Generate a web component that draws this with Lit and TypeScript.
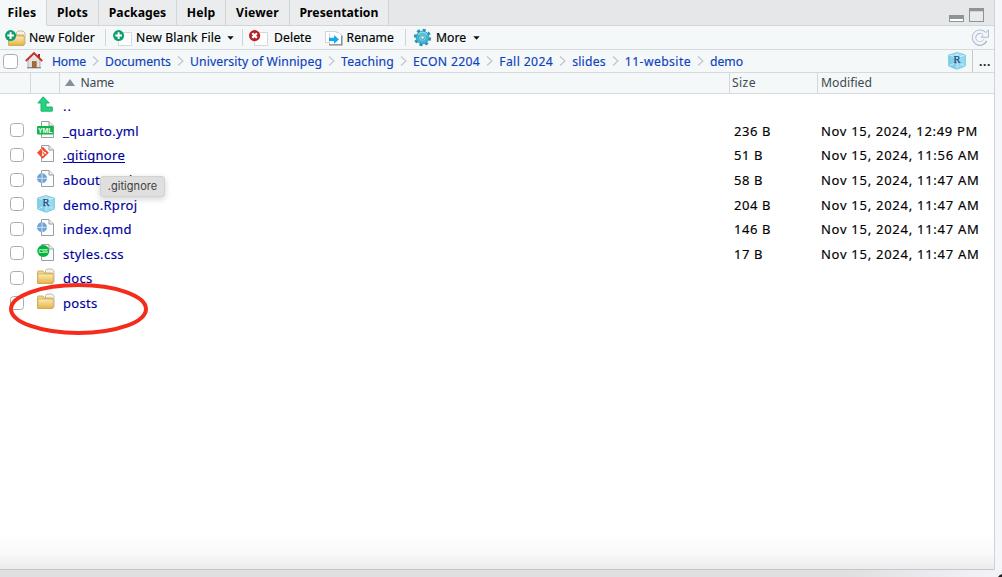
import { LitElement, html, css, svg, nothing } from "lit";
import { customElement, property } from "lit/decorators.js";

/* A text run whose tracking is computed so it fills a given advance width. */
@customElement("fit-text")
class FitText extends LitElement {
  @property({ type: Number }) w = 0;
  @property() text = "";
  @property({ type: Boolean, reflect: true }) underlined = false;
  static styles = css`
    :host { display: inline-block; white-space: pre; flex: none; }
    span { display: inline-block; }
    :host([underlined]) span { text-decoration: underline; text-underline-offset: 1.5px; text-decoration-thickness: 1px; }
  `;
  render() {
    return html`<span>${this.text}</span>`;
  }
  firstUpdated() {
    const el = this.renderRoot.querySelector("span") as HTMLElement;
    const natural = el.getBoundingClientRect().width;
    this.style.width = this.w + "px";
    el.style.letterSpacing = (this.w - natural) / this.text.length + "px";
  }
}

const t = (text: string, w: number, u = false) => html`<fit-text .text=${text} .w=${w} .underlined=${u}></fit-text>`;

const page = svg`<path d="M4.5 .5H12L16.5 5V16.5H4.5Z" fill="#fbfcfd" stroke="#9a9fa5"/><path d="M12 .5V5H16.5" fill="#e9ecef" stroke="#9a9fa5"/>`;
const cube = svg`<path d="M9 .5L17.3 3V14L9 17.3L.7 14V3Z" fill="#a5e0f1"/><path d="M.7 3L9 5.8V17.3L.7 14Z" fill="#82d0ea"/><path d="M9 5.8L17.3 3V14L9 17.3Z" fill="#97d9ee"/><path d="M1 3L9 5.8L17 3M1 14L9 10L17 14M9 1V17" fill="none" stroke="#d5f3fa" stroke-width=".8"/><path d="M9 .5L17.3 3V14L9 17.3L.7 14V3Z" fill="none" stroke="#62bcd8" stroke-width=".7"/><text x="5.4" y="11.4" font-family="Liberation Serif" font-size="10.5" fill="#1f4a86" stroke="#1f4a86" stroke-width=".25">R</text>`;
const folder = svg`<path d="M8.5 5V2.5L10 1H15L17 3V14H9Z" fill="#f5f3ea" stroke="#b7ab8a" stroke-width=".8"/><path d="M.6 4Q.6 3 1.6 3H6L7.5 5H15.5V15.3H.6Z" fill="#f1d68a" stroke="#c3a252" stroke-width=".8"/><path d="M.8 6H16.3V14.4Q16.3 15.4 15.3 15.4H.8Z" fill="url(#fg)" stroke="#c9a552" stroke-width=".7"/><defs><linearGradient id="fg" x2="0" y2="1"><stop stop-color="#fbeab2"/><stop offset="1" stop-color="#e6b447"/></linearGradient></defs>`;
const plus = svg`<circle cx="5.6" cy="5.6" r="5.5" fill="#0d9f6b"/><path d="M5.6 2.3V8.9M2.3 5.6H8.9" stroke="#fff" stroke-width="2"/>`;
const blank = svg`<path d="M5.5 2.5H18.5V15.5H5.5Z" fill="#fff" stroke="#d5d8db"/>`;

const glyphs: Record<string, unknown> = {
  up: svg`<path d="M6.2 .8L12.3 7H9V11H15.3V15.2H4V7H.8Z" fill="#22d482" stroke="#17ae68" stroke-width=".9" stroke-linejoin="round"/>`,
  yml: svg`${page}<rect x="0" y="5" width="16.5" height="8.6" rx="1" fill="#12b548"/><text x="1" y="12" font-family="Liberation Sans" font-weight="bold" font-size="7.8" textLength="14.4" lengthAdjust="spacingAndGlyphs" fill="#fff">YML</text>`,
  git: svg`${page}<path d="M5.8 1.8L11.8 7.8L5.8 13.8L0 7.8Z" fill="#f04e31"/><path d="M4.5 4.3L5.8 5.8V10.2M5.8 6L8.3 8" stroke="#fff" stroke-width=".9" fill="none"/><circle cx="5.8" cy="10.1" r="1" fill="#fff"/><circle cx="8.2" cy="8" r=".9" fill="#fff"/>`,
  qmd: svg`${page}<circle cx="5" cy="8.3" r="5" fill="#6fa3d4"/><path d="M5 3.3V13.3M0 8.3H10" stroke="#d9e8f5" stroke-width=".9"/>`,
  css: svg`${page}<circle cx="6.3" cy="7" r="6" fill="#05b33b"/><text x="1.8" y="9" font-family="Liberation Sans" font-weight="bold" font-size="5.6" textLength="9" lengthAdjust="spacingAndGlyphs" fill="#e5ffe8">CSS</text>`,
  cube,
  folder,
  newFolder: svg`<g transform="translate(3 0)">${folder}</g>${plus}`,
  newFile: svg`${blank}${plus}`,
  del: svg`${blank}<circle cx="5.6" cy="5.6" r="5.6" fill="#b71f23"/><path d="M3.3 3.3L7.9 7.9M7.9 3.3L3.3 7.9" stroke="#fff" stroke-width="2.2"/>`,
  rename: svg`<path d="M.5 1.5H11.5V12.5H.5Z" fill="#fff" stroke="#d1d5d8"/><path d="M4.5 3V15.5H17.5V6L13.5 2.5H11" fill="#fff" stroke="#d1d5d8"/><path d="M16.7 5.5V14.7H4" fill="none" stroke="#777c81" stroke-width="1.1"/><path d="M4 7.8H9V5L14 9.4L9 13.8V11H4Z" fill="#16a9ea"/>`,
  gear: svg`<circle cx="8.5" cy="8.5" r="7.2" fill="none" stroke="#2c91b1" stroke-width="3" stroke-dasharray="2.9 2.75"/><circle cx="8.5" cy="8.5" r="6.5" fill="#41b5d4" stroke="#2b8fae" stroke-width=".7"/><path d="M4 5.5Q8.5 1 13 5.5" stroke="#87dceb" stroke-width="1.5" fill="none"/><circle cx="8.5" cy="8.5" r="3.2" fill="#7ccbe0"/><circle cx="8.5" cy="8.5" r="1.8" fill="#e2f1f5" stroke="#2c87a5" stroke-width=".7"/>`,
  home: svg`<path d="M13 2H15V7L13 5Z" fill="#8c3126"/><path d="M3 8L9 2L15 8V15.5H3Z" fill="#e6e2dc" stroke="#a4a09a" stroke-width=".8"/><path d="M2 15.8H16" stroke="#777" stroke-width="1"/><rect x="7.2" y="9.5" width="4" height="6" fill="#a66a3b" stroke="#7d4c29" stroke-width=".5"/><path d="M.8 9L9 1L17.2 9" fill="none" stroke="#c9302a" stroke-width="1.9"/>`,
  refresh: svg`<path d="M13.4 11.3A6 6 0 1 1 12 4.2" fill="none" stroke="#a9b3cb" stroke-width="4.4"/><path d="M9 8.3H16.5V1Z" fill="#f0f4fb" stroke="#a9b3cb" stroke-width=".9"/><path d="M13 11A5.8 5.8 0 1 1 12 4.5L13.5 6" fill="none" stroke="#f0f4fb" stroke-width="2.8"/>`,
  min: svg`<rect x=".5" y="8.5" width="14" height="6" fill="#fff" stroke="#8b9597"/><rect x="0" y="8" width="15" height="4" fill="#8b9597"/>`,
  max: svg`<rect x=".5" y="1.5" width="14" height="13" fill="#e9eaeb" stroke="#8b9597"/><rect x="0" y="1" width="15" height="3.3" rx="1" fill="#8b9597"/>`,
};
const icon = (name: string, w = 18, h = 18) =>
  html`<svg class="icon" width=${w} height=${h} viewBox="0 0 ${w} ${h}">${glyphs[name]}</svg>`;
const caret = html`<svg class="icon caret" width="7" height="4" viewBox="0 0 7 4"><path d="M.3 .3H6.7L3.5 3.8Z" fill="#111"/></svg>`;
const chevron = html`<svg class="chev" width="19" height="12" viewBox="0 0 19 12"><path d="M7 1.5L12 6L7 10.5" fill="none" stroke="#bfc4ca" stroke-width="1.1"/></svg>`;

const crumbs: [string, number][] = [
  ["Home", 34], ["Documents", 66], ["University of Winnipeg", 132], ["Teaching", 53],
  ["ECON 2204", 67.2], ["Fall 2024", 54], ["slides", 33.6], ["11-website", 66.2], ["demo", 33],
];
const files: [string, string, number, string?, string?][] = [
  ["yml", "_quarto.yml", 76, "236 B", "12:49 PM"],
  ["git", ".gitignore", 62, "51 B", "11:56 AM"],
  ["qmd", "about.qmd", 69.5, "58 B", "11:47 AM"],
  ["cube", "demo.Rproj", 74.5, "204 B", "11:47 AM"],
  ["qmd", "index.qmd", 69, "146 B", "11:47 AM"],
  ["css", "styles.css", 61, "17 B", "11:47 AM"],
  ["folder", "docs", 29.5],
  ["folder", "posts", 34.5],
];

@customElement("app-root")
class AppRoot extends LitElement {
  static styles = css`
    :host { display: block; width: 1002px; height: 577px; overflow: hidden; position: relative; background: #f4f6f9;
      font: 12.2px "Noto Sans", "Open Sans", sans-serif; color: #000; }
    * { box-sizing: border-box; }
    .icon, .chev { flex: none; display: block; overflow: visible; }
    .caret { margin-top: 1px; }
    .panel { width: 995px; height: 570px; border-right: 1px solid #cfd3d7; border-bottom: 1px solid #c5c8cb; background: #fff; display: flex; flex-direction: column; }
    .tabs { height: 26px; flex: none; display: flex; background: #e6e7e9; font-weight: 700; }
    .tab { height: 26px; border-right: 1px solid #d3d6d9; border-bottom: 1px solid #d3d6d9; background: #ebecee; display: flex; align-items: center; justify-content: center; }
    .tab.on { background: #f4f8f9; border-bottom-color: #f4f8f9; }
    .t0 { width: 47px; padding-right: 2px; } .t1 { width: 52px; } .t2 { width: 78px; } .t3 { width: 49px; } .t4 { width: 64px; } .t5 { width: 99px; }
    .wins { flex: 1; border-bottom: 1px solid #d3d6d9; display: flex; justify-content: flex-end; gap: 5px; padding: 7px 10px 0 0; }
    .bar { height: 24px; flex: none; background: #f4f8f9; border-bottom: 1px solid #d6dadd; display: flex; align-items: center; padding-left: 5px; }
    .sep { width: 1px; height: 17px; background: #d0d4d7; flex: none; margin-top: -1px; }
    .bar, .crumbs, .link, .row { -webkit-text-stroke: .15px currentColor; }
    .g3 { margin-left: 3px; } .g4 { margin-left: 4px; } .g5 { margin-left: 5px; } .g6 { margin-left: 6px; } .g7 { margin-left: 7px; } .g8 { margin-left: 8px; } .g10 { margin-left: 10px; } .g11 { margin-left: 11px; } .g13 { margin-left: 13px; }
    .last { margin-left: auto; margin-right: 5px; }
    .crumbs { height: 23px; flex: none; background: #f4f8f9; border-bottom: 1px solid #d6dadd; display: flex; align-items: center; padding-left: 3px; color: #0d41bd; }
    .box { width: 14px; height: 14px; border: 1px solid #a9abad; border-radius: 3.5px; background: #fff; flex: none; }
    .crumbs .box { width: 15px; height: 15px; }
    .home { margin: -1px 9px 0 7px; }
    .dots { width: 22px; height: 22px; margin-left: 6px; border-left: 1px solid #c5c9cd; padding: 3px 0 0 6px; color: #111; font-weight: 600; }
    .crumbs .proj { margin-left: auto; margin-top: -1px; }
    .head { height: 21px; flex: none; background: #f4f8f9; border-bottom: 1px solid #d6dadd; color: #3f4850; display: grid; grid-template-columns: 31px 29px 670px 88px 1fr; }
    .head > div { border-right: 1px solid #d3d7da; display: flex; align-items: center; padding: 0 0 2px 2px; }
    .head > div:last-child { border-right: 0; padding-left: 3px; }
    .head .name { padding-left: 5px; gap: 5.5px; }
    .rows { flex: 1; font-size: 13px; background: linear-gradient(to bottom, #fff 440px, #fafafa 458px, #ececed 100%); }
    .row { height: 24.6px; display: grid; grid-template-columns: 37px 26px 671px 87px 1fr; align-items: center; }
    .row .box { margin: -1px 0 0 10px; }
    .row .icon { margin-top: -2px; }
    .link { color: #0000a0; }
    .foot { height: 7px; width: 1002px; background: linear-gradient(to right, #dfe0e2 850px, #f0f2f5 985px); }
    .tip { position: absolute; left: 100px; top: 176px; width: 65px; height: 21px; border-radius: 3px; background: #dfdfdf; border: 1px solid #d2d2d2; box-shadow: 0 2px 6px rgba(0,0,0,.18); color: #414141; font: 11px Inter, sans-serif; display: flex; align-items: center; justify-content: center; padding-bottom: 1px; }
    .ring { position: absolute; left: 0; top: 275px; }
    .corner { position: absolute; right: 0; bottom: 0; }
  `;
  render() {
    const tabs: [string, number][] = [["Files", 29], ["Plots", 31], ["Packages", 57.5], ["Help", 28.5], ["Viewer", 43], ["Presentation", 79]];
    return html`
      <div class="panel">
        <div class="tabs">
          ${tabs.map(([n, w], i) => html`<div class="tab t${i} ${i ? "" : "on"}">${t(n, w)}</div>`)}
          <div class="wins">${icon("min", 15, 15)}${icon("max", 15, 15)}</div>
        </div>
        <div class="bar">
          ${icon("newFolder", 20, 16)}<span class="g4">${t("New Folder", 66)}</span>
          <i class="sep g10"></i>
          <span class="g7">${icon("newFile", 19, 16)}</span><span class="g4">${t("New Blank File", 85)}</span><span class="g6">${caret}</span>
          <i class="sep g8"></i>
          <span class="g6">${icon("del", 19, 16)}</span><span class="g6">${t("Delete", 37.5)}</span>
          <span class="g13">${icon("rename", 18, 16)}</span><span class="g4">${t("Rename", 47.5)}</span>
          <i class="sep g11"></i>
          <span class="g8">${icon("gear", 17, 17)}</span><span class="g5">${t("More", 30)}</span><span class="g7">${caret}</span>
          <span class="last">${icon("refresh", 17, 17)}</span>
        </div>
        <div class="crumbs">
          <span class="box"></span><span class="home">${icon("home", 18, 17)}</span>
          ${crumbs.map(([n, w], i) => html`${i ? chevron : nothing}${t(n, w)}`)}
          <span class="proj">${icon("cube")}</span><span class="dots">${t("...", 12)}</span>
        </div>
        <div class="head">
          <div></div><div></div>
          <div class="name"><svg width="10" height="7" viewBox="0 0 10 7"><path d="M5 0L10 7H0Z" fill="#858e99"/></svg>${t("Name", 33.5)}</div>
          <div>${t("Size", 24)}</div><div>${t("Modified", 51)}</div>
        </div>
        <div class="rows">
          <div class="row"><span></span>${icon("up")}<span class="link">${t("..", 9)}</span></div>
          ${files.map(([ic, n, w, size, time]) => html`
            <div class="row">
              <span class="box"></span>${icon(ic)}
              <span class="link">${t(n, w, n === ".gitignore")}</span>
              <span>${size ? t(size, size.length === 5 ? 37 : 29) : nothing}</span>
              <span>${time ? t("Nov 15, 2024, " + time, time.endsWith("PM") ? 157 : 158.5) : nothing}</span>
            </div>`)}
        </div>
      </div>
      <div class="foot"></div>
      <div class="tip">${t(".gitignore", 49.5)}</div>
      <svg class="ring" width="160" height="65" viewBox="0 0 160 65"><ellipse cx="78.5" cy="34" rx="67.5" ry="24" fill="none" stroke="#f32c1c" stroke-width="4"/></svg>
      <svg class="corner" width="4" height="3" viewBox="0 0 4 3"><path d="M0 3Q1 1 4 0V3Z" fill="#222"/></svg>
    `;
  }
}
